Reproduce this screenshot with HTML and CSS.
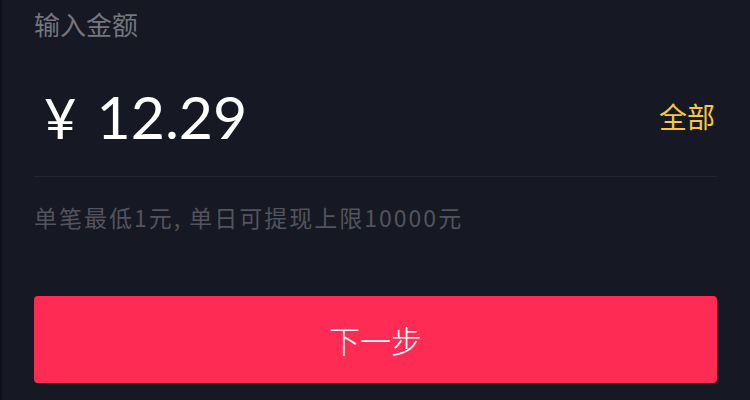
FILE: index.html
```html
<!DOCTYPE html>
<html lang="zh-CN">
<head>
<meta charset="utf-8">
<link rel="stylesheet" href="styles.css">
</head>
<body>
<div class="page">
  <div class="label">输入金额</div>
  <div class="amount-row">
    <div class="amount"><span class="yen">¥</span><span class="value">12.29</span></div>
    <div class="all">全部</div>
  </div>
  <div class="hint">单笔最低1元, 单日可提现上限10000元</div>
  <button class="next">下一步</button>
</div>
</body>
</html>
```

FILE: styles.css
```css
html, body {
  margin: 0;
  padding: 0;
  background: #161823;
  height: 100%;
}
body {
  font-family: "Noto Sans CJK SC", "Noto Sans", sans-serif;
}
.page {
  height: 400px;
  box-sizing: border-box;
  border-left: 2px solid #0f1017;
  padding: 6px 33px 0 32px;
  overflow: hidden;
}
.label {
  font-size: 26px;
  line-height: 36px;
  color: #75767e;
}
.amount-row {
  margin-top: 14px;
  height: 120px;
  display: flex;
  align-items: center;
  justify-content: space-between;
  border-bottom: 1px solid #23242e;
}
.amount {
  display: flex;
  align-items: baseline;
  color: #ffffff;
  font-family: "Lato", "Noto Sans", sans-serif;
  font-weight: 400;
  padding-left: 10px;
}
.yen {
  font-size: 56px;
  margin-right: 20px;
}
.value {
  font-size: 59px;
}
.all {
  font-size: 28px;
  color: #f5c843;
  padding-right: 2px;
}
.hint {
  margin-top: 25px;
  font-size: 23px;
  line-height: 30px;
  color: #53545d;
  letter-spacing: 2px;
}
.next {
  display: block;
  width: 100%;
  margin-top: 64px;
  height: 87px;
  border: none;
  border-radius: 4px;
  background: #fe2c55;
  color: #ffffff;
  font-family: "Noto Sans CJK SC", "Noto Sans", sans-serif;
  font-size: 31px;
  font-weight: 300;
}
```
